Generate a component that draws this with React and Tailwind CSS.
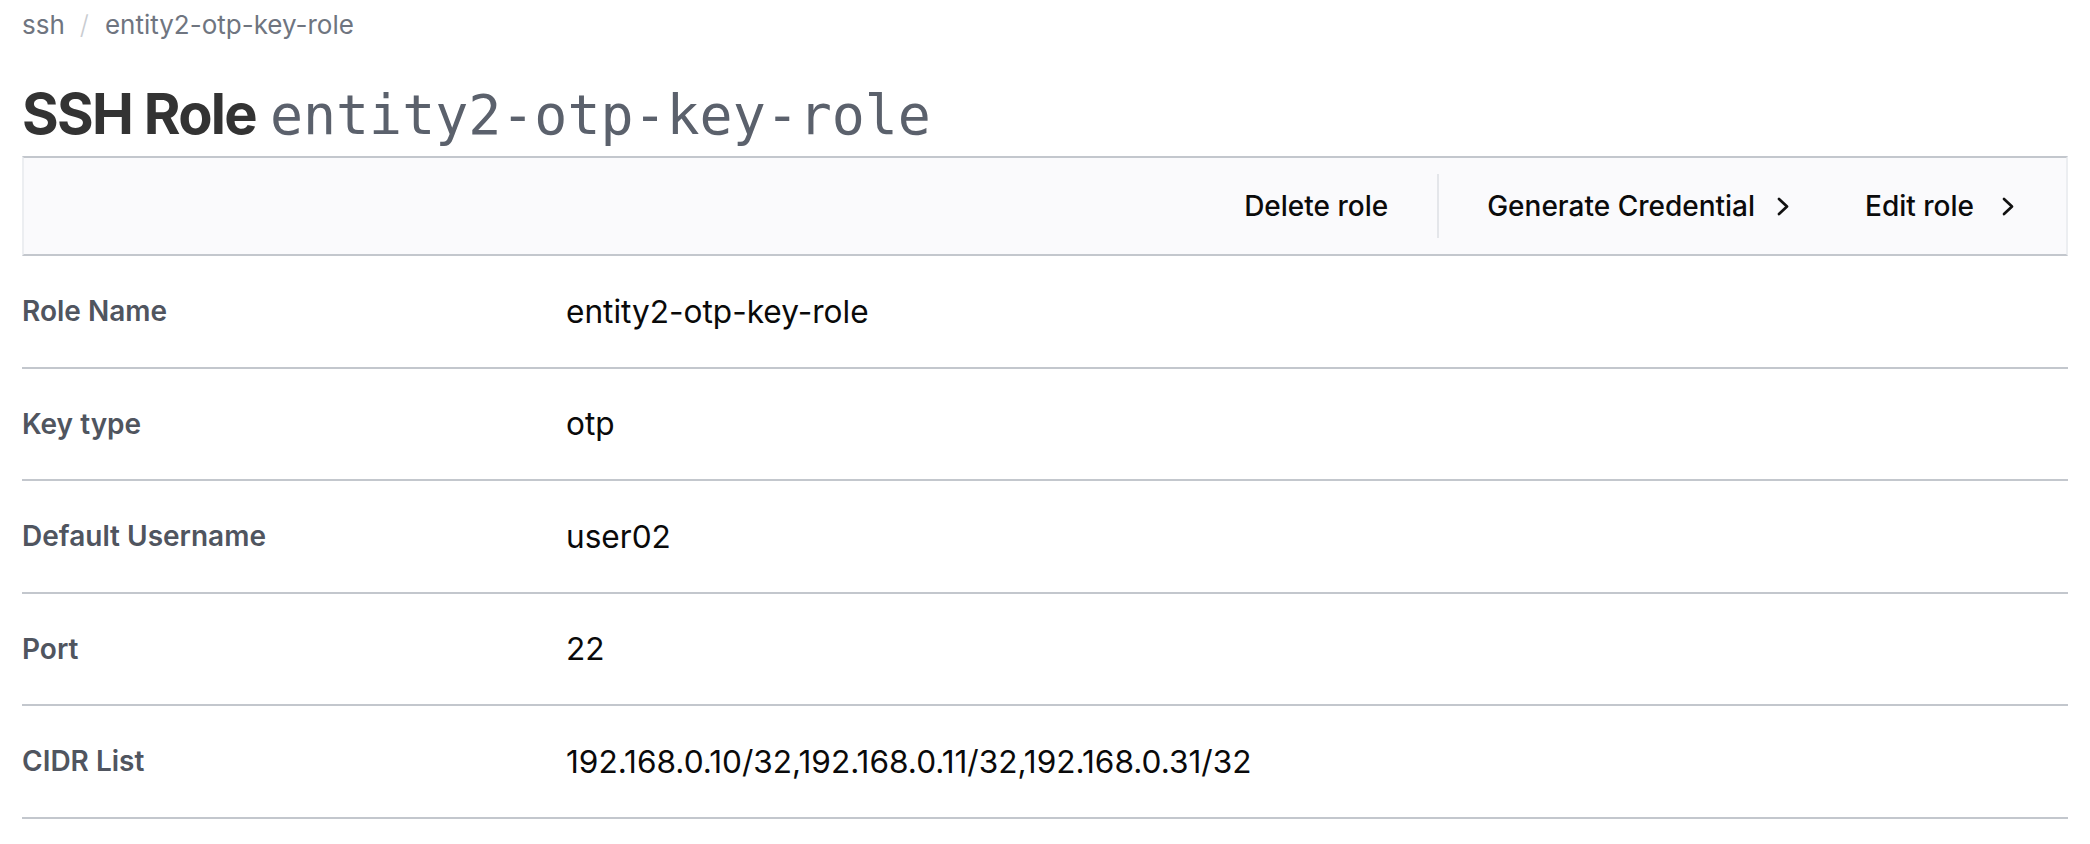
import React from "react";

const Chevron = () => (
  <svg width="16" height="20" viewBox="0 0 16 20" fill="none" className="shrink-0">
    <path d="M4 3 L12 10.5 L4 18" stroke="#111111" strokeWidth="2.7" strokeLinecap="round" strokeLinejoin="round" />
  </svg>
);

const rows = [
  ["Role Name", "entity2-otp-key-role"],
  ["Key type", "otp"],
  ["Default Username", "user02"],
  ["Port", "22"],
  ["CIDR List", "192.168.0.10/32,192.168.0.11/32,192.168.0.31/32"],
];

export default function App() {
  return (
    <div className="min-h-[844px] bg-white px-[22px] font-['Inter',sans-serif]">
      <nav className="flex items-center pt-[7px] text-[26px] leading-[36px] text-[#6f7580]">
        <span>ssh</span>
        <span className="ml-[15px] mr-[16px] text-[#c9ccd1] font-light">/</span>
        <span>entity2-otp-key-role</span>
      </nav>

      <h1 className="mt-[39px] h-[64px] leading-[64px] whitespace-nowrap">
        <span className="text-[56px] font-bold tracking-[-0.03em] text-[#333333]">SSH Role</span>
        <span className="ml-[14px] text-[54.9px] font-['DejaVu_Sans_Mono',monospace] font-normal text-[#5b616c]">
          entity2-otp-key-role
        </span>
      </h1>

      <div className="mt-[10px] flex h-[100px] items-center justify-end border-y-2 border-x-2 border-y-[#c3c7cd] border-x-[#eceef1] bg-[#fafafc] pr-[50px] text-[28px] font-medium text-[#0b0b0b]">
        <span>Delete role</span>
        <span className="ml-[49px] h-[64px] w-[2px] bg-[#e4e6ea]" />
        <span className="ml-[48px]">Generate Credential</span>
        <span className="ml-[20px]"><Chevron /></span>
        <span className="ml-[74px]">Edit role</span>
        <span className="ml-[26px]"><Chevron /></span>
      </div>

      <div>
        {rows.map(([label, value]) => (
          <div
            key={label}
            className="grid h-[112.5px] grid-cols-[544px_1fr] items-center border-b-2 border-[#c3c7cd]"
          >
            <div className="text-[28px] font-semibold text-[#50555f]">{label}</div>
            <div className="text-[31.6px] text-[#0a0a0a]">{value}</div>
          </div>
        ))}
      </div>
    </div>
  );
}
